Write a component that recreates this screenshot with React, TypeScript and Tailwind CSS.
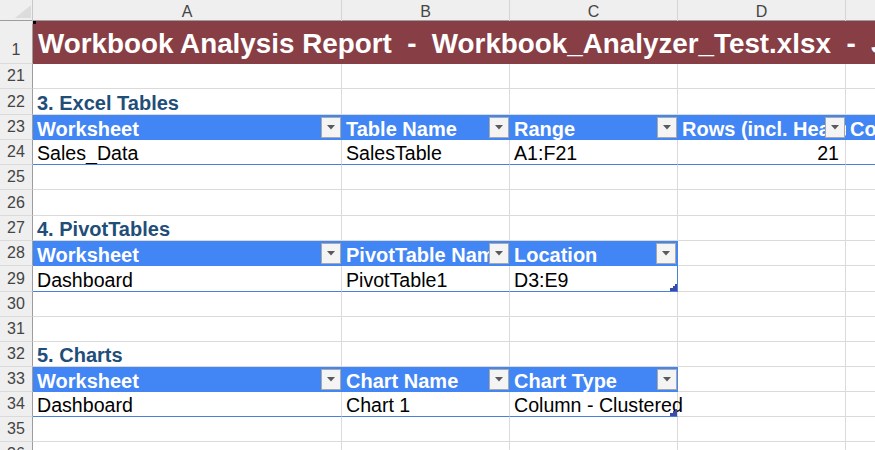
import React from "react";

const COLS = "grid-cols-[33px_309px_168px_168px_168px_168px]";
const FONT = { fontFamily: '"Liberation Sans", Arial, sans-serif' };

type Kind = "blank" | "section" | "head" | "data";

interface Row {
  n: number;
  h: string;
  kind: Kind;
  cells?: string[];
  span?: number; // number of table columns
  last?: boolean; // last data row of a table
  right?: boolean; // right blue border
  spill?: boolean; // last cell text may run past the edge
  alignRight?: number[];
}

const rows: Row[] = [
  { n: 21, h: "h-[25px]", kind: "blank" },
  { n: 22, h: "h-[26px]", kind: "section", cells: ["3. Excel Tables"] },
  { n: 23, h: "h-[25px]", kind: "head", cells: ["Worksheet", "Table Name", "Range", "Rows (incl. Header)", "Columns"], span: 5 },
  { n: 24, h: "h-[25px]", kind: "data", cells: ["Sales_Data", "SalesTable", "A1:F21", "21", ""], span: 5, last: true, alignRight: [3] },
  { n: 25, h: "h-[25px]", kind: "blank" },
  { n: 26, h: "h-[26px]", kind: "blank" },
  { n: 27, h: "h-[25px]", kind: "section", cells: ["4. PivotTables"] },
  { n: 28, h: "h-[25px]", kind: "head", cells: ["Worksheet", "PivotTable Name", "Location"], span: 3, right: true },
  { n: 29, h: "h-[26px]", kind: "data", cells: ["Dashboard", "PivotTable1", "D3:E9"], span: 3, last: true, right: true },
  { n: 30, h: "h-[25px]", kind: "blank" },
  { n: 31, h: "h-[25px]", kind: "blank" },
  { n: 32, h: "h-[25px]", kind: "section", cells: ["5. Charts"] },
  { n: 33, h: "h-[25px]", kind: "head", cells: ["Worksheet", "Chart Name", "Chart Type"], span: 3 },
  { n: 34, h: "h-[25px]", kind: "data", cells: ["Dashboard", "Chart 1", "Column - Clustered"], span: 3, last: true, spill: true },
  { n: 35, h: "h-[25px]", kind: "blank" },
  { n: 36, h: "h-[25px]", kind: "blank" },
];

const FilterButton: React.FC = () => (
  <span className="absolute right-[1px] top-[2px] w-[20px] h-[21px] bg-[#f4f4f4] border border-[#a8a8a8] flex items-center justify-center">
    <svg width="8" height="5" viewBox="0 0 8 5">
      <polygon points="0,0 8,0 4,4.5" fill="#5a5a5a" />
    </svg>
  </span>
);

const ResizeHandle: React.FC = () => (
  <svg className="absolute right-0 bottom-0 z-10" width="7" height="7" viewBox="0 0 7 7">
    <polygon points="7,0 7,7 0,7 0,4 3,4 3,2 5,2 5,0" fill="#3b4aa8" />
  </svg>
);

const RowNum: React.FC<{ n: number; bottom?: boolean }> = ({ n, bottom }) => (
  <div
    className={`bg-[#efefef] border-r border-r-[#9d9d9d] border-b border-b-[#dadada] flex justify-center text-[16px] text-[#444] ${
      bottom ? "items-end pb-[1px]" : "items-center"
    }`}
  >
    {n}
  </div>
);

const SheetRow: React.FC<{ row: Row }> = ({ row }) => {
  const cols = [0, 1, 2, 3, 4];
  return (
    <div className={`grid ${COLS} ${row.h}`}>
      <RowNum n={row.n} />
      {cols.map((i) => {
        const inTable = row.span !== undefined && i < row.span;
        const text = row.cells?.[i] ?? "";
        const isLastCol = row.span !== undefined && i === row.span - 1;

        if (row.kind === "section") {
          return (
            <div key={i} className="border-r border-b border-[#dadada] relative">
              {i === 0 && (
                <span className="absolute left-[4px] bottom-[-1px] whitespace-nowrap text-[20px] font-bold text-[#1f4e79] leading-[24px]">
                  {text}
                </span>
              )}
            </div>
          );
        }

        if (row.kind === "head" && inTable) {
          return (
            <div
              key={i}
              className={`relative bg-[#4285f4] overflow-hidden flex items-end pl-[4px] ${
                isLastCol && row.right ? "border-r border-r-[#4285f4]" : ""
              }`}
            >
              <span className="whitespace-nowrap text-[20px] font-bold text-white leading-[23px] mb-[-1px]">{text}</span>
              <FilterButton />
            </div>
          );
        }

        if (row.kind === "data" && inTable) {
          const right = row.alignRight?.includes(i);
          const spill = isLastCol && row.spill;
          return (
            <div
              key={i}
              className={`relative flex items-end border-b border-b-[#4a7fdc] ${spill ? "overflow-visible" : "overflow-hidden"} ${
                right ? "justify-end pr-[6px]" : "pl-[4px]"
              } ${isLastCol && row.right ? "border-r border-r-[#4a7fdc]" : "border-r border-r-[#dadada]"}`}
            >
              <span className="whitespace-nowrap text-[19.6px] text-black leading-[23px] mb-[-1px]">{text}</span>
              {isLastCol && row.span === 3 && <ResizeHandle />}
            </div>
          );
        }

        return <div key={i} className="border-r border-b border-[#dadada]" />;
      })}
    </div>
  );
};

export default function App() {
  const letters = ["A", "B", "C", "D", "E"];
  return (
    <div className="w-[875px] h-[450px] overflow-hidden bg-white" style={FONT}>
      <div className="w-[1014px]">
        {/* column headers */}
        <div className={`grid ${COLS} h-[21px] bg-[#efefef] border-b border-b-[#9d9d9d]`}>
          <div className="relative border-r border-r-[#c8c8c8]">
            <svg className="absolute left-[15px] top-[5px]" width="16" height="13" viewBox="0 0 16 13">
              <polygon points="16,0 16,13 0,13" fill="#dcdcdc" />
            </svg>
          </div>
          {letters.map((l, i) => (
            <div key={i} className="border-r border-r-[#d4d4d4] flex items-center justify-center text-[16px] text-[#444]">
              {l}
            </div>
          ))}
        </div>

        {/* title row */}
        <div className={`grid ${COLS} h-[43px]`}>
          <RowNum n={1} bottom />
          <div className="col-span-5 bg-[#883e45] overflow-hidden flex items-center pl-[5px] pt-[3px] relative">
            <span className="absolute left-0 top-0 w-[3px] h-[3px] bg-black" />
            <span className="whitespace-pre text-[27.8px] font-bold text-white leading-[32px]">
              Workbook Analysis Report  -  Workbook_Analyzer_Test.xlsx  -  June 2025
            </span>
          </div>
        </div>

        {rows.map((r) => (
          <SheetRow key={r.n} row={r} />
        ))}
      </div>
    </div>
  );
}
